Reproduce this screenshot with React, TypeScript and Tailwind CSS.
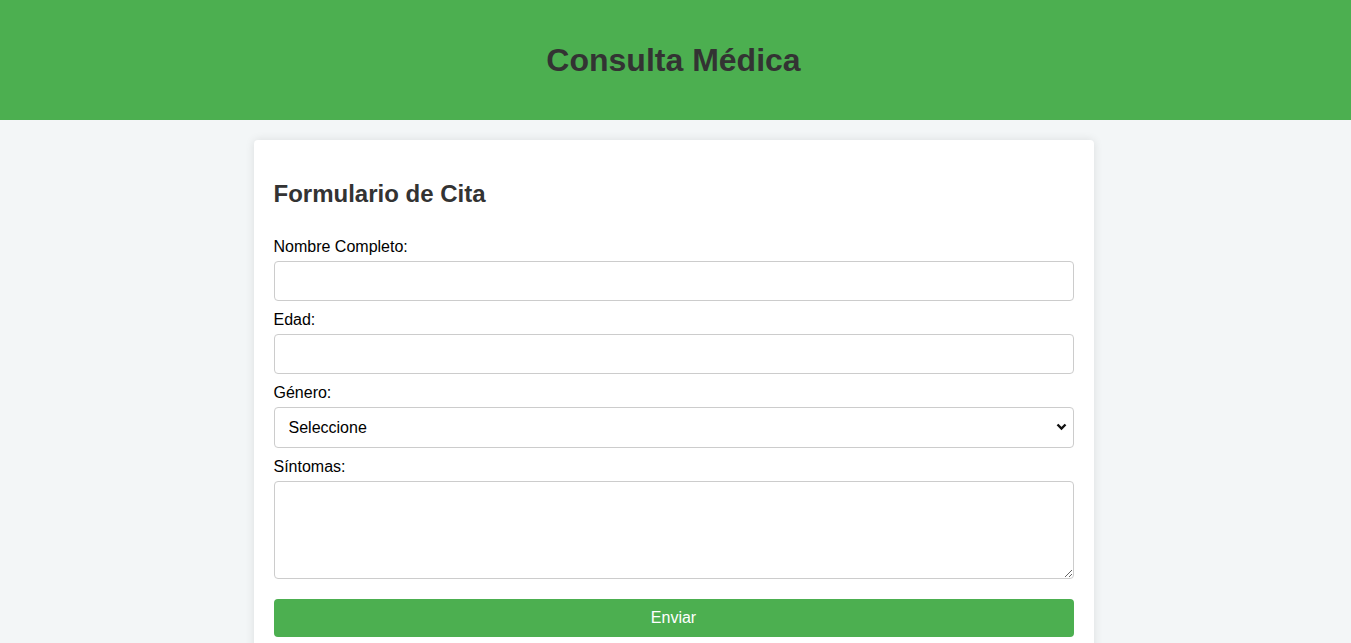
import React from "react";

export default function App() {
  return (
    <div className="min-h-screen bg-[#f3f6f7] font-['Liberation_Sans',Arial,sans-serif] text-black">
      <header className="bg-[#4caf50] h-[120px] flex items-center justify-center pr-[4px]">
        <h1 className="text-[32px] font-bold text-[#333] leading-[37px]">Consulta Médica</h1>
      </header>
      <div className="pr-[4px]">
        <main className="w-[840px] mx-auto mt-5 bg-white p-5 shadow-[0_0_10px_rgba(0,0,0,0.1)] rounded-[4px]">
          <h2 className="text-[24px] font-bold text-[#333] leading-[28px] mt-5 mb-5">Formulario de Cita</h2>
          <form className="flex flex-col" onSubmit={(e) => e.preventDefault()}>
            <label className="block text-[16px] leading-[18px] mt-[10px] mb-[5px]">Nombre Completo:</label>
            <input type="text" className="w-full h-[40px] px-[10px] border border-[#ccc] rounded-[4px] text-[16px] bg-white" />
            <label className="block text-[16px] leading-[18px] mt-[10px] mb-[5px]">Edad:</label>
            <input type="number" className="w-full h-[40px] px-[10px] border border-[#ccc] rounded-[4px] text-[16px] bg-white" />
            <label className="block text-[16px] leading-[18px] mt-[10px] mb-[5px]">Género:</label>
            <div className="relative">
              <select className="w-full h-[41px] pl-[14px] pr-8 border border-[#ccc] rounded-[4px] text-[16px] bg-white appearance-none">
                <option>Seleccione</option>
                <option>Masculino</option>
                <option>Femenino</option>
              </select>
              <svg className="absolute right-[7px] top-[15px] pointer-events-none" width="11" height="9" viewBox="0 0 11 9">
                <path d="M1.5 2.5 L5.5 6.5 L9.5 2.5" fill="none" stroke="#111" strokeWidth="2.4" />
              </svg>
            </div>
            <label className="block text-[16px] leading-[18px] mt-[10px] mb-[5px]">Síntomas:</label>
            <textarea className="w-full h-[98px] px-[10px] py-[10px] border border-[#ccc] rounded-[4px] text-[16px] bg-white block"></textarea>
            <button type="submit" className="mt-[20px] w-full h-[38px] bg-[#4caf50] text-white text-[16px] rounded-[4px]">Enviar</button>
          </form>
        </main>
      </div>
    </div>
  );
}
